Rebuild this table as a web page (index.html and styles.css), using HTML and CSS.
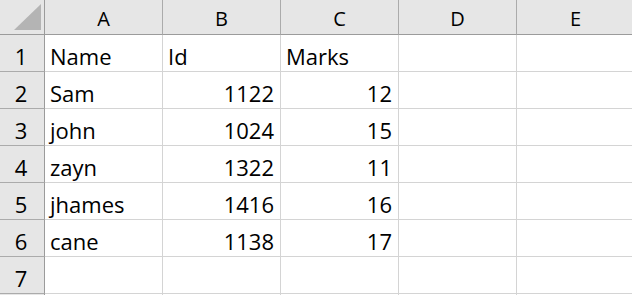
FILE: index.html
```html
<!DOCTYPE html>
<html>
<head>
<meta charset="utf-8">
<link rel="stylesheet" href="styles.css">
</head>
<body>
<div class="sheet">
  <div class="corner"><svg width="27" height="26" viewBox="0 0 27 26"><polygon points="27,0 27,26 0,26" fill="#b4b4b4"/></svg></div>
  <div class="colhead">A</div><div class="colhead">B</div><div class="colhead">C</div><div class="colhead">D</div><div class="colhead">E</div>

  <div class="rowhead">1</div><div class="cell">Name</div><div class="cell">Id</div><div class="cell">Marks</div><div class="cell"></div><div class="cell"></div>
  <div class="rowhead">2</div><div class="cell">Sam</div><div class="cell num">1122</div><div class="cell num">12</div><div class="cell"></div><div class="cell"></div>
  <div class="rowhead">3</div><div class="cell">john</div><div class="cell num">1024</div><div class="cell num">15</div><div class="cell"></div><div class="cell"></div>
  <div class="rowhead">4</div><div class="cell">zayn</div><div class="cell num">1322</div><div class="cell num">11</div><div class="cell"></div><div class="cell"></div>
  <div class="rowhead">5</div><div class="cell">jhames</div><div class="cell num">1416</div><div class="cell num">16</div><div class="cell"></div><div class="cell"></div>
  <div class="rowhead">6</div><div class="cell">cane</div><div class="cell num">1138</div><div class="cell num">17</div><div class="cell"></div><div class="cell"></div>
  <div class="rowhead">7</div><div class="cell"></div><div class="cell"></div><div class="cell"></div><div class="cell"></div><div class="cell"></div>
  <div class="rowhead"></div><div class="cell"></div><div class="cell"></div><div class="cell"></div><div class="cell"></div><div class="cell"></div>
</div>
</body>
</html>
```
FILE: styles.css
```css
html, body {
  margin: 0;
  padding: 0;
  background: #ffffff;
  overflow: hidden;
}
.sheet {
  display: grid;
  grid-template-columns: 45px repeat(5, 118px);
  grid-template-rows: 35px repeat(7, 37px) 2px;
  height: 295px;
  overflow: hidden;
  font-family: "Open Sans", "Noto Sans", sans-serif;
  color: #000;
}
.sheet > div {
  box-sizing: border-box;
  display: flex;
  align-items: flex-end;
  overflow: hidden;
  white-space: nowrap;
}
.corner {
  background: #e6e6e6;
  border-right: 1px solid #9b9b9b;
  border-bottom: 1px solid #9b9b9b;
  justify-content: flex-end;
  padding: 0 3px 4px 0;
}
.corner svg { display: block; }
.colhead {
  background: #e6e6e6;
  border-right: 1px solid #ababab;
  border-bottom: 1px solid #9b9b9b;
  justify-content: center;
  font-size: 20px;
  line-height: 28px;
  padding-bottom: 1px;
}
.rowhead {
  background: #e6e6e6;
  border-right: 1px solid #9b9b9b;
  border-bottom: 1px solid #ababab;
  justify-content: center;
  padding-right: 2px;
  font-size: 22px;
  line-height: 30px;
}
.cell {
  border-right: 1px solid #d4d4d4;
  border-bottom: 1px solid #d4d4d4;
  font-size: 22px;
  line-height: 30px;
  padding: 0 6px 0 5px;
}
.cell.num {
  justify-content: flex-end;
}
```
